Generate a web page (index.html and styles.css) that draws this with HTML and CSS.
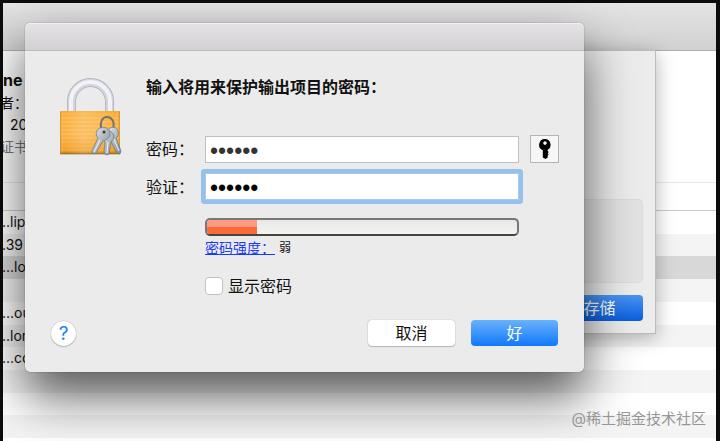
FILE: index.html
```html
<!DOCTYPE html>
<html lang="zh-CN">
<head>
<meta charset="utf-8">
<title>钥匙串访问</title>
<link rel="stylesheet" href="styles.css">
</head>
<body>
<main class="window">
  <header class="toolbar"></header>
  <section class="summary">
    <h2 class="cert-name">ne</h2>
    <p class="cert-line cert-issuer">者：.</p>
    <p class="cert-line cert-date">20</p>
    <p class="cert-line cert-status">证书</p>
  </section>
  <div class="columns"></div>
  <ul class="list">
    <li>..lip</li>
    <li>.39</li>
    <li class="selected">...lo</li>
    <li></li>
    <li>...ou</li>
    <li>..lon</li>
    <li>...co</li>
    <li></li>
    <li></li>
    <li></li>
  </ul>
</main>

<section class="sheet">
  <div class="sheet-box"></div>
  <button class="btn btn-save" type="button">存储</button>
</section>

<form class="dialog">
  <div class="titlebar"></div>
  <div class="content">
    <svg class="lock" viewBox="0 0 66 82" aria-hidden="true">
      <defs>
        <linearGradient id="body" x1="0" y1="0" x2="0" y2="1">
          <stop offset="0" stop-color="#f6a92f"/>
          <stop offset=".12" stop-color="#ffb94a"/>
          <stop offset=".55" stop-color="#fdba50"/>
          <stop offset=".92" stop-color="#f5a32c"/>
          <stop offset="1" stop-color="#a9700f"/>
        </linearGradient>
        <linearGradient id="sheen" x1="0" y1="0" x2="1" y2="0">
          <stop offset="0" stop-color="#b96c00" stop-opacity=".55"/>
          <stop offset=".06" stop-color="#fff" stop-opacity="0"/>
          <stop offset=".4" stop-color="#fff" stop-opacity=".2"/>
          <stop offset=".93" stop-color="#fff" stop-opacity="0"/>
          <stop offset="1" stop-color="#b96c00" stop-opacity=".55"/>
        </linearGradient>
        <linearGradient id="steel" x1="0" y1="0" x2="1" y2="1">
          <stop offset="0" stop-color="#e3e8ec"/>
          <stop offset="1" stop-color="#7f8a94"/>
        </linearGradient>
      </defs>
      <path d="M12.500 37V26.500a19 19 0 0 1 38 0V37" fill="none" stroke="#adb0ba" stroke-width="9"/>
      <path d="M12.500 37V26.500a19 19 0 0 1 38 0V37" fill="none" stroke="#d3d5de" stroke-width="7.500"/>
      <path d="M12 37V26.500a19.500 19.500 0 0 1 39 0V37" fill="none" stroke="#f1f1f6" stroke-width="4"/>
      <rect x="1" y="36" width="60" height="43" rx="1" fill="url(#body)"/>
      <path d="M1 41h60M1 45h60M1 49h60M1 53h60M1 57h60M1 61h60M1 65h60M1 69h60M1 73h60" stroke="#e79423" stroke-width="1" opacity=".45"/>
      <rect x="1" y="36" width="60" height="43" rx="1" fill="url(#sheen)"/>
      <path d="M1 79h60" stroke="#8d651f" opacity=".6"/>
      <path d="M43 56c-3-8 0-14 5-14s8 5 6 12" fill="none" stroke="#77736c" stroke-width="2"/>
      <g fill="url(#steel)" stroke="#68727b" stroke-width=".7">
        <path d="M50 54c3-3 8-2 9 2 1 3 0 6-2 7l5 13-1 3-4-2-6-13c-4-2-4-7-1-10z"/>
        <path d="M47 56c4-1 8 2 8 6 0 2-2 4-3 5l-2 12-3 1-2-3 1-10c-4-3-4-8 1-11z"/>
        <path d="M41 53c5-2 10 1 10 6 0 4-4 6-7 7l-7 12-3 1-1-3 6-13c-3-4-2-8 2-10z"/>
      </g>
      <circle cx="45" cy="57" r="1.500" fill="#303a43"/>
      <path d="M41 65l-6 12M49 67l-1 11M55 64l5 12" stroke="#f2f5f6" stroke-width="1" fill="none"/>
    </svg>

    <div class="form">
      <h1 class="heading">输入将用来保护输出项目的密码：</h1>
      <div class="fields">
        <label for="password">密码：</label>
        <input id="password" class="field" type="password" value="secret">
        <button class="key-btn" type="button" aria-label="密码助理">
          <svg viewBox="0 0 12 20" aria-hidden="true">
            <path fill-rule="evenodd" d="M6 0a5.800 5.800 0 0 1 2.700 10.800v1.200l1 1-1 1.300 1 1-1 1.300v1.900L6.500 20 3.800 18.400V11.200A5.800 5.800 0 0 1 6 0zm0 2.300a1.800 1.800 0 1 0 0 3.600 1.800 1.800 0 0 0 0-3.600z"/>
          </svg>
        </button>
        <label for="verify">验证：</label>
        <input id="verify" class="field focused" type="password" value="secret">
      </div>
      <div class="strength">
        <div class="meter" role="img" aria-label="弱"><div class="meter-fill"></div></div>
        <p class="strength-text"><a href="#strength">密码强度：</a><span>弱</span></p>
        <label class="show"><input type="checkbox">显示密码</label>
      </div>
    </div>
  </div>
  <footer class="actions">
    <button class="help" type="button">?</button>
    <button class="btn btn-cancel" type="button">取消</button>
    <button class="btn btn-primary" type="submit">好</button>
  </footer>
</form>
<p class="watermark">@稀土掘金技术社区</p>
</body>
</html>
```
FILE: styles.css
```css
* {
  box-sizing: border-box;
}

body {
  margin: 0;
  min-height: 100vh;
  padding: 3px 4px 0 3px;
  position: relative;
  overflow: hidden;
  background: #0c0c0c;
  color: #111;
  font: 16px/24px "Inter", "Noto Sans CJK SC", sans-serif;
}

h1, h2, p, ul {
  margin: 0;
  padding: 0;
}

button, input {
  font: inherit;
}

.window {
  min-height: calc(100vh - 3px);
  overflow: hidden;
  background: #fff;
  border-top: 1px solid #e4e4e4;
}

.toolbar {
  height: 47px;
  background: linear-gradient(#e3e3e3, #d1d1d1);
  border-bottom: 1px solid #b0b0b0;
}

.summary {
  height: 132px;
  padding-top: 17px;
  border-bottom: 1px solid #e8e8e8;
}

.cert-name {
  font-size: 16px;
  line-height: 24px;
}

.cert-line {
  font-size: 14px;
  line-height: 22px;
}

.cert-issuer,
.cert-status {
  text-indent: -3px;
}

.cert-date {
  padding-left: 7px;
}

.cert-status {
  color: #777;
}

.columns {
  height: 28px;
  border-bottom: 1px solid #ccc;
}

.list {
  height: 227px;
  display: grid;
  grid-auto-rows: 1fr;
  list-style: none;
  font-size: 14px;
  line-height: 22px;
}

.list li {
  text-indent: -1px;
}

.list li:nth-child(even) {
  background: #f4f4f4;
}

.list .selected {
  background: #d8d8d8;
}

.sheet {
  position: absolute;
  top: 50px;
  left: 84px;
  right: 64px;
  height: 284px;
  padding: 148px 12px 12px;
  display: flex;
  flex-direction: column;
  justify-content: space-between;
  align-items: flex-end;
  background: #ececec;
  border: 1px solid #bbb;
  box-shadow: 0 4px 18px rgba(0, 0, 0, .3);
}

.sheet-box {
  width: 100%;
  height: 84px;
  background: #e2e2e2;
  border: 1px solid #dcdcdc;
  border-radius: 5px;
}

.dialog {
  position: absolute;
  top: 23px;
  left: 25px;
  right: 136px;
  background: #ebebeb;
  border-radius: 5px;
  box-shadow: 0 0 1px rgba(0, 0, 0, .65), 0 24px 50px rgba(0, 0, 0, .65);
}

.titlebar {
  height: 28px;
  border-radius: 5px 5px 0 0;
  border-top: 1px solid #f2f0f2;
  border-bottom: 1px solid #bdbcbd;
  background: linear-gradient(#e5e2e5, #d3d1d3);
}

.content {
  display: flex;
  gap: 21px;
  padding: 24px 25px 0 34px;
}

.lock {
  width: 66px;
  height: 82px;
  flex: none;
}

.form {
  flex: 1;
}

.heading {
  font-size: 16px;
  line-height: 24px;
}

.fields {
  display: grid;
  grid-template-columns: 48px 1fr 29px;
  column-gap: 11px;
  row-gap: 10px;
  align-items: center;
  margin-top: 36px;
}

.field {
  width: 100%;
  height: 27px;
  padding: 4px 4px 0;
  border: 1px solid #bfbfbf;
  border-radius: 0;
  outline: none;
  background: #fff;
  color: #333;
  font-family: "Liberation Sans", sans-serif;
  font-size: 23px;
}

.focused {
  border-color: #a9c9ec;
  color: #000;
  box-shadow: 0 0 0 4px #97c1ed;
  border-radius: 1px;
}

.key-btn {
  height: 28px;
  padding: 0;
  display: grid;
  place-items: center;
  border: 1px solid #b5b5b5;
  background: #f6f6f6;
}

.key-btn svg {
  width: 12px;
  height: 20px;
}

.strength {
  padding: 18px 40px 0 59px;
}

.meter {
  height: 18px;
  overflow: hidden;
  border: 2px solid #777;
  border-bottom-color: #444;
  border-radius: 5px;
  background: linear-gradient(#e8e8e8, #f3f3f1);
}

.meter-fill {
  width: 16%;
  height: 100%;
  background: linear-gradient(#ff9b82 50%, #fc6b35 50%);
}

.strength-text {
  display: flex;
  gap: 4px;
  font-size: 14px;
  line-height: 24px;
}

.strength-text a {
  color: #1c3bf5;
}

.strength-text span {
  font-size: 12px;
}

.show {
  display: flex;
  align-items: center;
  gap: 5px;
  margin-top: 14px;
}

.show input {
  appearance: none;
  width: 18px;
  height: 18px;
  margin: 0;
  border: 1px solid #c2c2c2;
  border-radius: 4px;
  background: #fff;
}

.actions {
  display: flex;
  align-items: center;
  gap: 16px;
  padding: 22px 26px 26px;
}

.btn {
  width: 87px;
  height: 26px;
  padding: 0;
  border: 0;
  border-radius: 4px;
  line-height: 24px;
}

.btn-cancel {
  background: #fff;
  color: #111;
  box-shadow: 0 0 1px #888, 0 1px 1px #bbb;
}

.btn-primary {
  background: linear-gradient(#69b2fb, #1079fd);
  color: #fff;
}

.btn-save {
  background: linear-gradient(#4994f3, #0a5edd);
  color: #fff;
}

.help {
  width: 25px;
  height: 25px;
  margin-right: auto;
  padding: 0;
  border: 0;
  border-radius: 50%;
  background: #fff;
  box-shadow: 0 0 1px #888, 0 1px 1px #bbb;
  color: #1a82f7;
  font-size: 19px;
  line-height: 25px;
}

.watermark {
  position: absolute;
  right: 14px;
  bottom: 11px;
  color: #969696;
  font-size: 15px;
  line-height: 22px;
}
```
